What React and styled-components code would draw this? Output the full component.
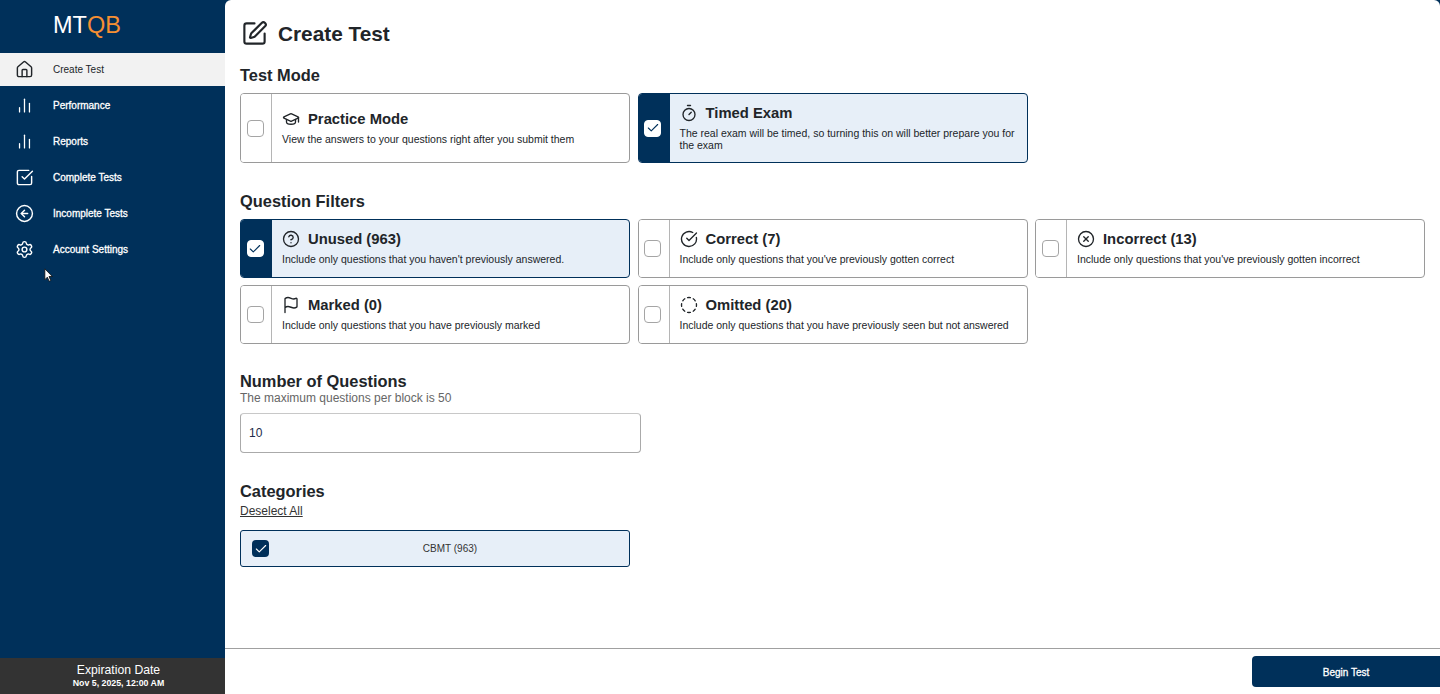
import React from 'react';
import styled, { createGlobalStyle } from 'styled-components';
import {
  House,
  ChartNoAxesColumn,
  SquareCheckBig,
  CircleArrowLeft,
  Settings,
  SquarePen,
  GraduationCap,
  Timer,
  CircleHelp,
  CircleCheckBig,
  CircleX,
  Flag,
  CircleDashed,
  Check,
} from 'lucide-react';

const NAVY = '#00305a';
const INK = '#212529';

const navItems = [
  { label: 'Create Test', Icon: House, active: true },
  { label: 'Performance', Icon: ChartNoAxesColumn, size: 17 },
  { label: 'Reports', Icon: ChartNoAxesColumn, size: 17 },
  { label: 'Complete Tests', Icon: SquareCheckBig },
  { label: 'Incomplete Tests', Icon: CircleArrowLeft },
  { label: 'Account Settings', Icon: Settings },
];

const filters = [
  { title: 'Unused (963)', text: "Include only questions that you haven't previously answered.", Icon: CircleHelp, on: true },
  { title: 'Correct (7)', text: "Include only questions that you've previously gotten correct", Icon: CircleCheckBig },
  { title: 'Incorrect (13)', text: "Include only questions that you've previously gotten incorrect", Icon: CircleX },
  { title: 'Marked (0)', text: 'Include only questions that you have previously marked', Icon: Flag },
  { title: 'Omitted (20)', text: 'Include only questions that you have previously seen but not answered', Icon: CircleDashed },
];

function OptionCard({ title, text, Icon, on, tall }) {
  return (
    <Card $on={on} $tall={tall}>
      <CheckCol $on={on}>
        <Box $on={on}>{on && <Check size={14} strokeWidth={1.9} color={NAVY} />}</Box>
      </CheckCol>
      <CardBody>
        <CardTitle>
          <Icon size={18} strokeWidth={1.8} />
          <span>{title}</span>
        </CardTitle>
        <CardText>{text}</CardText>
      </CardBody>
    </Card>
  );
}

export default function App() {
  return (
    <Page>
      <GlobalStyle />
      <Sidebar>
        <Logo>MT<em>QB</em></Logo>
        <Nav>
          {navItems.map(({ label, Icon, active, size = 19 }) => (
            <NavItem key={label} $active={active}>
              <NavIcon><Icon size={size} strokeWidth={1.8} /></NavIcon>
              <span>{label}</span>
            </NavItem>
          ))}
        </Nav>
        <Pointer viewBox="0 0 12 18" aria-hidden="true">
          <path d="M1 1v13l3-3 2.2 5 2-1-2.2-4.8H10z" fill="#fff" stroke="#111" strokeWidth="1" />
        </Pointer>
        <Expiry>
          <strong>Expiration Date</strong>
          <small>Nov 5, 2025, 12:00 AM</small>
        </Expiry>
      </Sidebar>

      <Main>
        <Content>
          <PageTitle>
            <SquarePen size={27} strokeWidth={1.9} />
            <h1>Create Test</h1>
          </PageTitle>

          <SectionTitle>Test Mode</SectionTitle>
          <CardGrid>
            <OptionCard
              tall
              title="Practice Mode"
              text="View the answers to your questions right after you submit them"
              Icon={GraduationCap}
            />
            <OptionCard
              tall
              on
              title="Timed Exam"
              text="The real exam will be timed, so turning this on will better prepare you for the exam"
              Icon={Timer}
            />
          </CardGrid>

          <FilterTitle>Question Filters</FilterTitle>
          <CardGrid>
            {filters.map((f) => (
              <OptionCard key={f.title} {...f} />
            ))}
          </CardGrid>

          <NumberTitle>Number of Questions</NumberTitle>
          <Hint>The maximum questions per block is 50</Hint>
          <NumberInput defaultValue="10" />

          <CategoryTitle>Categories</CategoryTitle>
          <Deselect>Deselect All</Deselect>
          <CategoryRow>
            <CategoryBox><Check size={14} strokeWidth={1.9} color="#fff" /></CategoryBox>
            <span>CBMT (963)</span>
          </CategoryRow>
        </Content>

        <Footer>
          <BeginButton>Begin Test</BeginButton>
        </Footer>
      </Main>
    </Page>
  );
}

const GlobalStyle = createGlobalStyle`
  html, body {
    margin: 0;
    padding: 0;
    background: ${NAVY};
    font-family: "Liberation Sans", Arial, sans-serif;
    overflow: hidden;
  }
  * {
    box-sizing: border-box;
  }
`;

const Page = styled.div`
  display: flex;
  width: 1440px;
  height: 694px;
  background: ${NAVY};
`;

const Sidebar = styled.aside`
  position: relative;
  display: flex;
  flex-direction: column;
  width: 225px;
  flex: none;
  color: #fff;
`;

const Logo = styled.div`
  height: 53px;
  padding: 12px 0 0 53px;
  font-size: 23.5px;
  line-height: 27px;

  em {
    font-style: normal;
    color: #f58f33;
  }
`;

const Nav = styled.nav`
  display: flex;
  flex-direction: column;
  flex: 1;
`;

const NavItem = styled.div`
  display: flex;
  align-items: center;
  gap: 19px;
  height: ${(p) => (p.$active ? '33px' : '36px')};
  margin-bottom: ${(p) => (p.$active ? '1px' : '0')};
  padding-left: 15px;
  font-size: 10px;
  -webkit-text-stroke: ${(p) => (p.$active ? '0' : '0.3px')};
  background: ${(p) => (p.$active ? '#f2f2f2' : 'transparent')};
  color: ${(p) => (p.$active ? '#212529' : '#fff')};
`;

const NavIcon = styled.span`
  display: flex;
  align-items: center;
  justify-content: center;
  width: 19px;
  flex: none;
  -webkit-text-stroke: 0;
`;

const Pointer = styled.svg`
  position: absolute;
  left: 44px;
  top: 268px;
  width: 10px;
  height: 15px;
`;

const Expiry = styled.div`
  display: flex;
  flex-direction: column;
  align-items: center;
  justify-content: center;
  height: 36px;
  padding-left: 12px;
  background: #333333;

  strong {
    font-size: 12.2px;
    font-weight: normal;
    line-height: 15px;
  }

  small {
    font-size: 8.8px;
    font-weight: bold;
    line-height: 11px;
  }
`;

const Main = styled.main`
  display: flex;
  flex-direction: column;
  flex: 1;
  min-width: 0;
  background: #fff;
  border-top-left-radius: 6px;
  border-top-right-radius: 6px;
  color: ${INK};
`;

const Content = styled.div`
  display: flex;
  flex-direction: column;
  flex: 1;
  padding: 20px 15px 0;
`;

const PageTitle = styled.div`
  display: flex;
  align-items: center;
  gap: 10px;
  height: 27px;
  padding-left: 1px;
  color: #212529;

  h1 {
    margin: 0;
    font-size: 20.8px;
    font-weight: bold;
  }
`;

const SectionTitle = styled.h2`
  margin: 18px 0 8px;
  font-size: 16.4px;
  line-height: 20px;
  font-weight: bold;
`;

const FilterTitle = styled(SectionTitle)`
  margin-top: 28px;
`;

const NumberTitle = styled(SectionTitle)`
  margin: 27px 0 1px;
`;

const CategoryTitle = styled(SectionTitle)`
  margin: 28px 0 3px;
`;

const CardGrid = styled.div`
  display: grid;
  grid-template-columns: repeat(3, 1fr);
  gap: 7px 7.5px;
`;

const Card = styled.div`
  display: flex;
  height: ${(p) => (p.$tall ? '70px' : '59px')};
  border: 1px solid ${(p) => (p.$on ? NAVY : '#9a9a9a')};
  border-radius: 4px;
  overflow: hidden;
  background: ${(p) => (p.$on ? '#e7eff8' : '#fff')};
`;

const CheckCol = styled.div`
  display: flex;
  align-items: center;
  justify-content: center;
  width: 31px;
  padding-right: 2px;
  flex: none;
  background: ${(p) => (p.$on ? NAVY : '#fff')};
  border-right: 1px solid ${(p) => (p.$on ? NAVY : '#b5b5b5')};
`;

const Box = styled.div`
  display: flex;
  align-items: center;
  justify-content: center;
  width: 17px;
  height: 17px;
  flex: none;
  border-radius: 4px;
  background: #fff;
  border: 1px solid ${(p) => (p.$on ? '#fff' : '#a5a5a5')};
`;

const CardBody = styled.div`
  display: flex;
  flex-direction: column;
  justify-content: center;
  flex: 1;
  padding: 0 10px 4px;
`;

const CardTitle = styled.div`
  display: flex;
  align-items: center;
  gap: 8px;
  height: 22px;
  font-size: 14.8px;
  font-weight: bold;
`;

const CardText = styled.p`
  margin: 3px 0 0;
  font-size: 10.5px;
  line-height: 12px;
  color: #212529;
`;

const Hint = styled.div`
  font-size: 12px;
  line-height: 14px;
  color: #666;
  margin-top: -1px;
`;

const NumberInput = styled.input`
  width: 401px;
  height: 40px;
  margin-top: 8px;
  padding: 0 8px;
  border: 1px solid #aaa;
  border-top-color: #c8c8c8;
  border-radius: 4px;
  font-family: inherit;
  font-size: 12px;
  color: #212a4a;
  outline: none;
`;

const Deselect = styled.a`
  align-self: flex-start;
  font-size: 12px;
  line-height: 14px;
  text-decoration: underline;
  color: #333;
`;

const CategoryRow = styled.div`
  position: relative;
  display: flex;
  align-items: center;
  justify-content: center;
  width: 390px;
  height: 37px;
  margin-top: 12px;
  padding-left: 30px;
  border: 1px solid ${NAVY};
  border-radius: 3px;
  background: #e7eff8;
  font-size: 10px;
  color: #333;
`;

const CategoryBox = styled.div`
  position: absolute;
  left: 11px;
  top: 9px;
  display: flex;
  align-items: center;
  justify-content: center;
  width: 17px;
  height: 17px;
  border-radius: 4px;
  background: ${NAVY};
`;

const Footer = styled.footer`
  display: flex;
  justify-content: flex-end;
  align-items: flex-start;
  height: 46px;
  padding-top: 7px;
  border-top: 1px solid #a0a0a0;
`;

const BeginButton = styled.button`
  width: 188px;
  height: 31px;
  padding: 1px 0 0;
  border: none;
  border-radius: 4px 0 0 4px;
  background: ${NAVY};
  color: #fff;
  font-family: inherit;
  font-size: 10px;
  -webkit-text-stroke: 0.3px;
`;
